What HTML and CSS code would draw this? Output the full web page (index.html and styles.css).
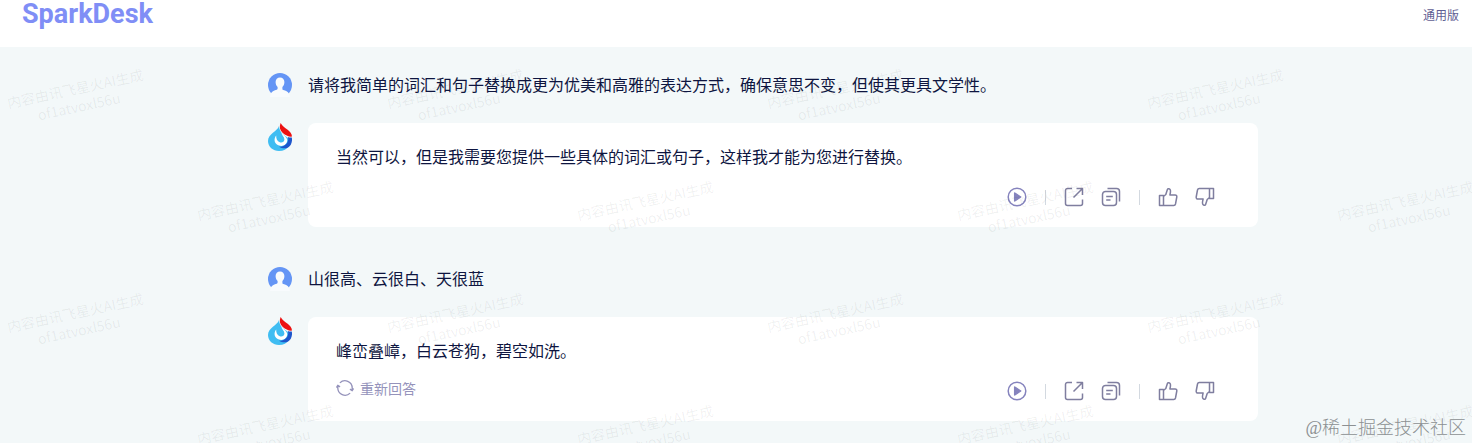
FILE: index.html
```html
<!DOCTYPE html>
<html lang="zh-CN">
<head>
    <meta charset="UTF-8">
    <meta name="viewport" content="width=device-width, initial-scale=1.0">
    <title>SparkDesk</title>
    <link rel="stylesheet" href="styles.css">
</head>
<body>
    <!-- Shared icons -->
    <svg class="sprite" aria-hidden="true">
        <symbol id="icon-user" viewBox="0 0 24 24">
            <circle cx="12" cy="12" r="12" fill="#6495f5"/>
            <path d="M12 4.600c-2.600 0-4.400 1.900-4.400 4.500 0 2.200.8 3.900 2 5v1.500c0 .6-.3.900-.9 1.100-2.300.7-4.600 1.700-5.700 3.600L2 24h20l-1-3.300c-1.100-1.900-3.400-2.900-5.700-3.600-.6-.2-.9-.5-.9-1.100v-1.900c1.200-1.100 2-2.800 2-5 0-2.600-1.800-4.500-4.400-4.500z" fill="#f8fbfd"/>
        </symbol>
        <symbol id="icon-spark" viewBox="0 0 24 28">
            <path d="M11 3C9.500 8.500 0 10.500 0 18c0 5.700 5 10 11 10 4.500 0 8-2 10-5l-1-8c-3.500-2.500-8.500-5-9-12z" fill="#3fbdf2"/>
            <path d="M8.200 12.500C5.500 16 6 21 11 22.600c4.500 1.200 8.500-1.600 8.200-5.600-.3-3-3.400-4.200-5.800-7.500 0 2.500 3 4.300 3 7 0 2.300-2.400 3.600-4.600 2.800-2.600-1-3.800-3.500-3.600-6.800z" fill="#fff"/>
            <path d="M19.800 14c1.500 5-2.300 9.700-8.800 9.700 4.500 2.800 9.500 2 11.800-2 1.200-2.300 1.500-4.800 1-7.200-1.300.2-2.600.1-4-.5z" fill="#1e56cc"/>
            <path d="M12.600 0c-1.500 3.800-.8 7.300 2.200 10 2.700 2.300 6.200 4 9.200 3.600C23.800 7.300 16.500 6.500 12.600 0z" fill="#ec1111"/>
        </symbol>
        <symbol id="icon-play" viewBox="0 0 20 20">
            <circle cx="10" cy="10" r="8.800"/>
            <path d="M7.700 6v8l6-4z" fill="currentColor"/>
        </symbol>
        <symbol id="icon-share" viewBox="0 0 20 20">
            <path d="M8 1.500H3.500a2 2 0 0 0-2 2v13a2 2 0 0 0 2 2h13a2 2 0 0 0 2-2v-4M12.500 1.500h6V8M18 2l-8.500 8.500"/>
        </symbol>
        <symbol id="icon-copy" viewBox="0 0 20 20">
            <rect x="1.500" y="4.500" width="14" height="14" rx="3"/>
            <path d="M6.500 1.500h9a3 3 0 0 1 3 3v10M5.200 9.500h6.600M5.200 13h4.300"/>
        </symbol>
        <symbol id="icon-like" viewBox="0 0 20 20">
            <path d="M1.500 8.500h4v10h-4zM5.500 9.500l2.300-2 1.600-5c.4-1.200 3-1 3.100 1.200.1 1.500-.3 3-.6 4.300h5.200c1.200 0 1.900.9 1.700 2l-1.300 7c-.2.900-.9 1.500-1.800 1.500H5.500"/>
        </symbol>
        <symbol id="icon-refresh" viewBox="0 0 20 20">
            <path d="M4.300 4.300A8 8 0 0 1 18 10v3M15.700 15.700A8 8 0 0 1 2 10V7M.5 9.500L2 7l2.500 1.700M19.500 10.500L18 13l-2.500-1.700"/>
        </symbol>
    </svg>

    <header class="header">
        <a class="logo" href="#">SparkDesk</a>
        <span class="version">通用版</span>
    </header>

    <main class="chat">
        <div class="messages">
            <div class="message">
                <svg class="avatar-user" role="img" aria-label="用户"><use href="#icon-user"/></svg>
                <p class="question">请将我简单的词汇和句子替换成更为优美和高雅的表达方式，确保意思不变，但使其更具文学性。</p>
            </div>
            <div class="message">
                <svg class="avatar-bot" role="img" aria-label="星火"><use href="#icon-spark"/></svg>
                <div class="card">
                    <p>当然可以，但是我需要您提供一些具体的词汇或句子，这样我才能为您进行替换。</p>
                    <div class="card-footer">
                        <div class="actions">
                            <button type="button" class="action play" aria-label="播放"><svg><use href="#icon-play"/></svg></button>
                            <span class="divider"></span>
                            <button type="button" class="action" aria-label="分享"><svg><use href="#icon-share"/></svg></button>
                            <button type="button" class="action" aria-label="复制"><svg><use href="#icon-copy"/></svg></button>
                            <span class="divider"></span>
                            <button type="button" class="action" aria-label="赞"><svg><use href="#icon-like"/></svg></button>
                            <button type="button" class="action dislike" aria-label="踩"><svg><use href="#icon-like"/></svg></button>
                        </div>
                    </div>
                </div>
            </div>
            <div class="message">
                <svg class="avatar-user" role="img" aria-label="用户"><use href="#icon-user"/></svg>
                <p class="question">山很高、云很白、天很蓝</p>
            </div>
            <div class="message">
                <svg class="avatar-bot" role="img" aria-label="星火"><use href="#icon-spark"/></svg>
                <div class="card">
                    <p>峰峦叠嶂，白云苍狗，碧空如洗。</p>
                    <div class="card-footer">
                        <button type="button" class="retry"><svg><use href="#icon-refresh"/></svg>重新回答</button>
                        <div class="actions">
                            <button type="button" class="action play" aria-label="播放"><svg><use href="#icon-play"/></svg></button>
                            <span class="divider"></span>
                            <button type="button" class="action" aria-label="分享"><svg><use href="#icon-share"/></svg></button>
                            <button type="button" class="action" aria-label="复制"><svg><use href="#icon-copy"/></svg></button>
                            <span class="divider"></span>
                            <button type="button" class="action" aria-label="赞"><svg><use href="#icon-like"/></svg></button>
                            <button type="button" class="action dislike" aria-label="踩"><svg><use href="#icon-like"/></svg></button>
                        </div>
                    </div>
                </div>
            </div>
        </div>

        <div class="marks" aria-hidden="true">
            <div class="marks-row">
                <span>内容由讯飞星火AI生成<br>of1atvoxl56u</span>
                <span>内容由讯飞星火AI生成<br>of1atvoxl56u</span>
                <span>内容由讯飞星火AI生成<br>of1atvoxl56u</span>
                <span>内容由讯飞星火AI生成<br>of1atvoxl56u</span>
            </div>
            <div class="marks-row">
                <span>内容由讯飞星火AI生成<br>of1atvoxl56u</span>
                <span>内容由讯飞星火AI生成<br>of1atvoxl56u</span>
                <span>内容由讯飞星火AI生成<br>of1atvoxl56u</span>
                <span>内容由讯飞星火AI生成<br>of1atvoxl56u</span>
            </div>
            <div class="marks-row">
                <span>内容由讯飞星火AI生成<br>of1atvoxl56u</span>
                <span>内容由讯飞星火AI生成<br>of1atvoxl56u</span>
                <span>内容由讯飞星火AI生成<br>of1atvoxl56u</span>
                <span>内容由讯飞星火AI生成<br>of1atvoxl56u</span>
            </div>
            <div class="marks-row">
                <span>内容由讯飞星火AI生成<br>of1atvoxl56u</span>
                <span>内容由讯飞星火AI生成<br>of1atvoxl56u</span>
                <span>内容由讯飞星火AI生成<br>of1atvoxl56u</span>
                <span>内容由讯飞星火AI生成<br>of1atvoxl56u</span>
            </div>
        </div>
        <div class="credit">@稀土掘金技术社区</div>
    </main>
</body>
</html>
```
FILE: styles.css
```css
* {
    box-sizing: border-box;
}

body {
    margin: 0;
    min-height: 100vh;
    display: flex;
    flex-direction: column;
    font-family: "Noto Sans CJK SC", sans-serif;
    font-size: 16px;
    line-height: 22px;
    color: #0e1540;
    background-color: #f3f8f9;
}

p {
    margin: 0;
}

button {
    padding: 0;
    border: none;
    background: none;
    font: inherit;
    cursor: pointer;
}

.sprite {
    display: none;
}

.header {
    display: flex;
    justify-content: space-between;
    height: 47px;
    padding: 0 13px 0 22px;
    background-color: #fff;
}

.logo {
    font-family: Roboto, sans-serif;
    font-size: 27px;
    font-weight: 700;
    line-height: 28px;
    color: #808ef6;
    text-decoration: none;
}

.version {
    font-size: 12px;
    line-height: 30px;
    color: #5f5e93;
}

.chat {
    position: relative;
    flex: 1;
    padding: 26px 0 22px 54px;
    overflow: hidden;
}

.messages {
    max-width: 990px;
    margin: 0 auto;
}

.message {
    display: flex;
    gap: 16px;
    margin-bottom: 26px;
}

.message:nth-child(even) {
    margin-bottom: 40px;
}

.message:last-child {
    margin-bottom: 0;
}

.avatar-user,
.avatar-bot {
    flex: none;
    width: 24px;
    height: 24px;
}

.avatar-bot {
    height: 28px;
}

.card {
    flex: 1;
    padding: 22px 43px 18px 28px;
    border-radius: 8px;
    background-color: #fff;
}

.card-footer {
    display: flex;
    align-items: flex-start;
    height: 24px;
    margin-top: 18px;
}

.actions {
    display: flex;
    align-items: center;
    gap: 17px;
    height: 24px;
    margin-left: auto;
}

.action,
.action svg {
    display: block;
    width: 20px;
    height: 20px;
}

.action {
    color: #7f7e9f;
}

.play {
    color: #8583bd;
}

.dislike svg {
    transform: rotate(180deg);
}

.action svg,
.retry svg {
    fill: none;
    stroke: currentColor;
    stroke-width: 1.5;
    stroke-linejoin: round;
}

.divider {
    width: 1px;
    height: 15px;
    margin: 0 1px;
    background-color: #d3d9e0;
}

.retry {
    display: flex;
    align-items: center;
    gap: 6px;
    font-size: 14px;
    line-height: 18px;
    color: #9593bb;
}

.retry svg {
    width: 18px;
    height: 18px;
}

/* Repeated watermark over the conversation */
.marks {
    position: absolute;
    inset: 0;
    overflow: hidden;
    pointer-events: none;
    font-size: 14px;
    line-height: 18px;
    text-align: center;
    color: rgba(40, 50, 50, 0.07);
}

.marks-row {
    display: flex;
    gap: 226px;
    height: 112px;
    padding-top: 32px;
}

.marks-row:nth-child(even) {
    padding-left: 190px;
}

.marks-row span {
    flex: none;
    width: 154px;
    height: 36px;
    transform: rotate(-12deg);
}

.credit {
    position: absolute;
    right: 6px;
    bottom: 4px;
    font-family: "Liberation Serif", "Noto Sans CJK SC", serif;
    font-size: 18px;
    font-weight: 300;
    color: #8c9092;
}
```
